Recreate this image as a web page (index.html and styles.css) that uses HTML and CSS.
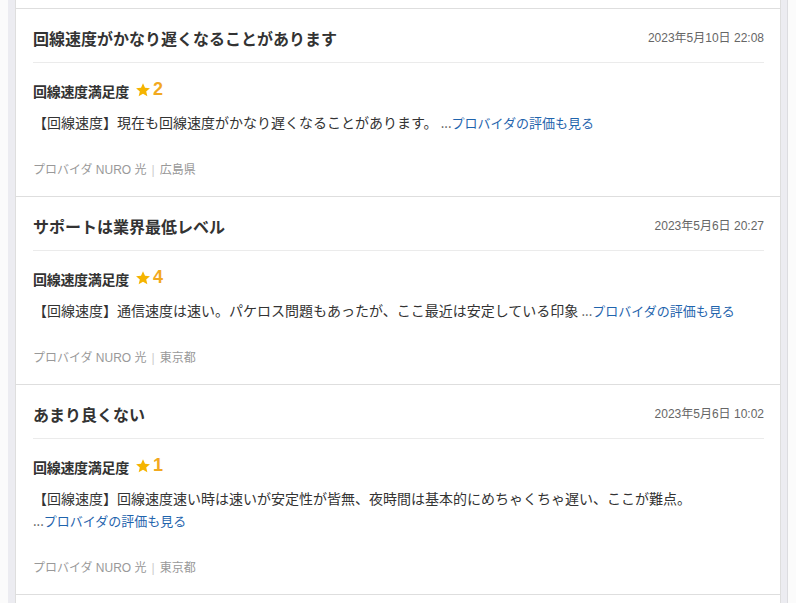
FILE: index.html
```html
<!DOCTYPE html>
<html lang="ja">
<head>
<meta charset="utf-8">
<link rel="stylesheet" href="styles.css">
</head>
<body>
<div class="wrap">
  <div class="card card-prev"></div>

  <div class="card">
    <div class="head">
      <h2 class="title">回線速度がかなり遅くなることがあります</h2>
      <span class="date">2023年5月10日 22:08</span>
    </div>
    <div class="rating">
      <span class="label">回線速度満足度</span>
      <svg class="star" viewBox="0 0 24 24" width="16" height="16"><path d="M12 1.8l3 6.9 7.4.6-5.6 4.9 1.7 7.3L12 17.6l-6.5 3.9 1.7-7.3L1.6 9.3 9 8.7z"/></svg>
      <span class="score">2</span>
    </div>
    <p class="body">【回線速度】現在も回線速度がかなり遅くなることがあります。 <span class="ell">...</span><a class="more" href="#">プロバイダの評価も見る</a></p>
    <p class="foot">プロバイダ NURO 光<span class="sep">|</span>広島県</p>
  </div>

  <div class="card">
    <div class="head">
      <h2 class="title">サポートは業界最低レベル</h2>
      <span class="date">2023年5月6日 20:27</span>
    </div>
    <div class="rating">
      <span class="label">回線速度満足度</span>
      <svg class="star" viewBox="0 0 24 24" width="16" height="16"><path d="M12 1.8l3 6.9 7.4.6-5.6 4.9 1.7 7.3L12 17.6l-6.5 3.9 1.7-7.3L1.6 9.3 9 8.7z"/></svg>
      <span class="score">4</span>
    </div>
    <p class="body">【回線速度】通信速度は速い。パケロス問題もあったが、ここ最近は安定している印象 <span class="ell">...</span><a class="more" href="#">プロバイダの評価も見る</a></p>
    <p class="foot">プロバイダ NURO 光<span class="sep">|</span>東京都</p>
  </div>

  <div class="card">
    <div class="head">
      <h2 class="title">あまり良くない</h2>
      <span class="date">2023年5月6日 10:02</span>
    </div>
    <div class="rating">
      <span class="label">回線速度満足度</span>
      <svg class="star" viewBox="0 0 24 24" width="16" height="16"><path d="M12 1.8l3 6.9 7.4.6-5.6 4.9 1.7 7.3L12 17.6l-6.5 3.9 1.7-7.3L1.6 9.3 9 8.7z"/></svg>
      <span class="score">1</span>
    </div>
    <p class="body">【回線速度】回線速度速い時は速いが安定性が皆無、夜時間は基本的にめちゃくちゃ遅い、ここが難点。<br><span class="ell">...</span><a class="more" href="#">プロバイダの評価も見る</a></p>
    <p class="foot">プロバイダ NURO 光<span class="sep">|</span>東京都</p>
  </div>

  <div class="card card-next"></div>
</div>
</body>
</html>
```

FILE: styles.css
```css
html, body {
  margin: 0;
  padding: 0;
  background: #fbfbfb;
  font-family: "Liberation Sans", "Noto Sans CJK JP", sans-serif;
  color: #333;
}

.wrap {
  margin-left: 8px;
  width: 766px;
  padding: 0 6px 0 7px;
  background: #ececf1;
  border-right: 1px solid #dcdce0;
  height: 603px;
  overflow: hidden;
}

.card {
  background: #fff;
  border: 1px solid #dedede;
  border-top: none;
  padding: 17px 16px 17px 17px;
}

.card-prev {
  height: 8px;
  padding: 0;
}

.card-next {
  height: 40px;
  padding: 0;
  border-bottom: none;
}

.head {
  display: flex;
  justify-content: space-between;
  align-items: center;
  height: 24px;
  padding-bottom: 12px;
  border-bottom: 1px solid #ebebeb;
}

.title {
  margin: 0;
  font-family: "Noto Sans CJK JP", sans-serif;
  font-size: 16px;
  font-weight: 700;
  line-height: 24px;
  color: #333;
}

.date {
  font-size: 12px;
  color: #666;
  line-height: 24px;
}

.rating {
  display: flex;
  align-items: center;
  margin-top: 16px;
  height: 24px;
}

.label {
  font-family: "Noto Sans CJK JP", sans-serif;
  font-size: 14px;
  font-weight: 700;
  color: #333;
  letter-spacing: -0.3px;
}

.star {
  fill: #f5b400;
  margin-left: 6px;
  margin-top: -3px;
}

.score {
  font-family: "Liberation Sans", sans-serif;
  font-size: 18px;
  font-weight: 700;
  color: #f2a91f;
  margin-left: 2px;
  margin-top: -3px;
}

.body {
  margin: 8px 0 0;
  font-family: "Noto Sans CJK JP", sans-serif;
  font-size: 14px;
  line-height: 22px;
  color: #333;
}

.ell {
  color: #555;
  font-size: 13px;
  line-height: 1;
}

.more {
  color: #1f64ad;
  font-size: 13px;
  line-height: 1;
  text-decoration: none;
}

.foot {
  margin: 28px 0 0;
  height: 18px;
  font-size: 12px;
  line-height: 18px;
  color: #999;
}

.sep {
  color: #ccc;
  margin: 0 5px;
}
```
